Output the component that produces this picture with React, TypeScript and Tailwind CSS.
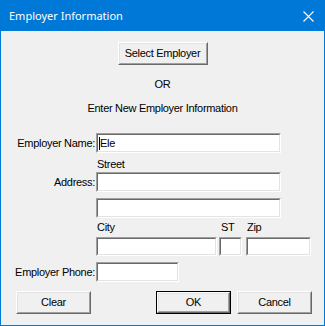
const ui = "font-['Liberation_Sans',Arial,sans-serif] text-[11px] leading-[13px] tracking-[-0.3px] text-black";

function Sunken({ className = "", children }: { className?: string; children?: React.ReactNode }) {
  return (
    <div
      className={`border border-t-[#a0a0a0] border-l-[#a0a0a0] border-b-white border-r-white ${className}`}
    >
      <div className="flex h-full w-full items-center border border-t-[#696969] border-l-[#696969] border-b-[#e3e3e3] border-r-[#e3e3e3] bg-white">
        {children}
      </div>
    </div>
  );
}

function Btn({
  label,
  className = "",
  isDefault = false
}: {
  label: string;
  className?: string;
  isDefault?: boolean;
}) {
  const face = (
    <div className="flex h-full w-full border border-t-white border-l-white border-b-[#696969] border-r-[#696969]">
      <div className="flex flex-1 items-center justify-center border border-t-[#e3e3e3] border-l-[#e3e3e3] border-b-[#a0a0a0] border-r-[#a0a0a0] bg-[#f0f0f0]">
        {label}
      </div>
    </div>
  );

  return isDefault ? (
    <div className={`border border-black ${className}`}>{face}</div>
  ) : (
    <div className={className}>{face}</div>
  );
}

export default function App() {
  return (
    <div className="flex h-[326px] w-[325px] flex-col border border-[#0078d7] bg-[#f0f0f0]">
      {/* title bar */}
      <div className="flex h-[30px] items-center justify-between bg-[#0078d7] pl-[8px] pr-[10px]">
        <span className="font-['Noto_Sans',sans-serif] text-[11px] text-white">
          Employer Information
        </span>
        <svg width="11" height="11" viewBox="0 0 11 11" className="mt-[1px]">
          <path d="M0.5 0.5 L10.5 10.5 M10.5 0.5 L0.5 10.5" stroke="white" strokeWidth="1.1" />
        </svg>
      </div>

      <div className={`flex flex-1 flex-col ${ui}`}>
        <div className="mt-[11px] flex justify-center">
          <Btn label="Select Employer" className="h-[23px] w-[90px]" />
        </div>

        <p className="mt-[13px] text-center">OR</p>
        <p className="mt-[11px] text-center">Enter New Employer Information</p>

        <div className="mt-[18px] flex h-[20px] items-center">
          <span className="w-[94px] text-right">Employer Name:</span>
          <Sunken className="ml-px h-[20px] w-[185px]">
            <span className="ml-px h-[13px] w-px bg-black" />
            <span>Ele</span>
          </Sunken>
        </div>

        <p className="mt-[5px] pl-[96px]">Street</p>
        <div className="mt-px flex h-[20px] items-center">
          <span className="w-[94px] text-right">Address:</span>
          <Sunken className="ml-px h-[20px] w-[185px]" />
        </div>
        <div className="mt-[6px] flex">
          <Sunken className="ml-[95px] h-[20px] w-[185px]" />
        </div>

        <div className="ml-[95px] mt-[3px] flex">
          <div className="flex w-[121px] flex-col">
            <span className="pl-px">City</span>
            <Sunken className="mt-[3px] h-[19px]" />
          </div>
          <div className="ml-[2px] flex w-[23px] flex-col">
            <span className="pl-[2px]">ST</span>
            <Sunken className="mt-[3px] h-[19px]" />
          </div>
          <div className="ml-[4px] flex w-[65px] flex-col">
            <span className="pl-px">Zip</span>
            <Sunken className="mt-[3px] h-[19px]" />
          </div>
        </div>

        <div className="mt-[6px] flex h-[20px] items-center">
          <span className="w-[94px] text-right">Employer Phone:</span>
          <Sunken className="ml-px h-[20px] w-[83px]" />
        </div>

        <div className="mt-[9px] flex pl-[15px] pr-[12px]">
          <Btn label="Clear" className="h-[23px] w-[75px]" />
          <Btn label="OK" isDefault className="ml-auto h-[23px] w-[75px]" />
          <Btn label="Cancel" className="ml-[6px] h-[23px] w-[75px]" />
        </div>
      </div>
    </div>
  );
}
